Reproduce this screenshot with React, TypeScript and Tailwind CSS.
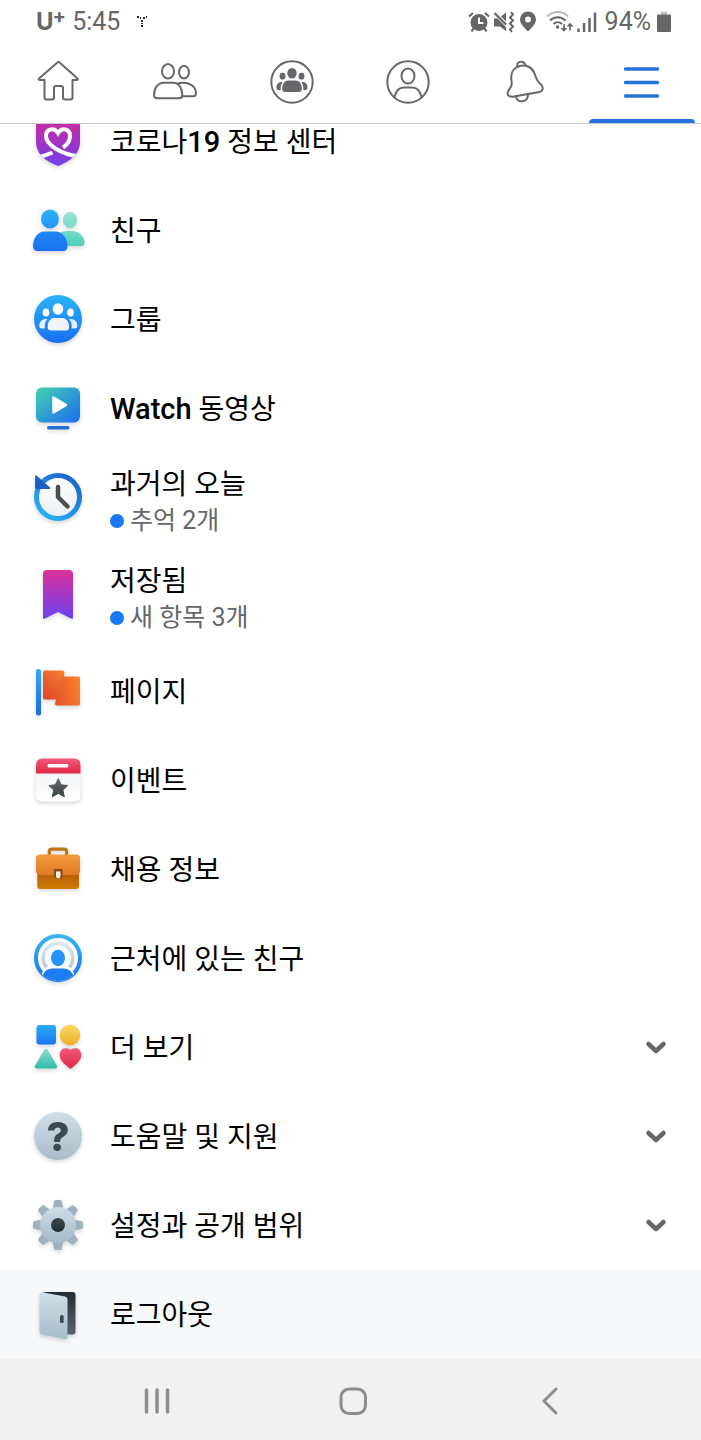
import React from 'react';

interface MenuItem {
  label: React.ReactNode;
  icon: React.ReactNode;
  note?: string;
  expandable?: boolean;
  highlighted?: boolean;
}

interface GradientProps {
  id: string;
  from: string;
  to: string;
  diagonal?: boolean;
}

const Gradient: React.FC<GradientProps> = ({ id, from, to, diagonal }) => (
  <linearGradient id={id} x1="0" y1="0" x2={diagonal ? '1' : '0'} y2="1">
    <stop offset="0" stopColor={from} />
    <stop offset="1" stopColor={to} />
  </linearGradient>
);

const MenuIcon: React.FC<{ children: React.ReactNode }> = ({ children }) => (
  <svg viewBox="0 0 56 56" className="size-14 shrink-0 overflow-visible drop-shadow-[0_2px_2px_rgba(0,0,0,0.16)]" aria-hidden="true">
    {children}
  </svg>
);

const CovidIcon = () => (
  <MenuIcon>
    <defs>
      <Gradient id="covid" from="#d02a9c" to="#6f3fee" />
      <clipPath id="covid-shield">
        <path d="M9 9.500H47Q50 9.500 50 12.500V29C50 41 41 48 28 53C15 48 6 41 6 29V12.500Q6 9.500 9 9.500Z" />
      </clipPath>
    </defs>
    <g clipPath="url(#covid-shield)">
      <rect x="4" y="6" width="48" height="48" fill="url(#covid)" />
      <path d="M5 44.500Q14 43.500 22.500 39.500" fill="none" stroke="#fff" strokeWidth="4" />
      <path
        d="M33 34.500C38 31 40 27 40 23C40 15.500 31.500 14 28 20C24.500 14 16 15.500 16 23C16 31 30 42 52 43.500"
        fill="none"
        stroke="#fff"
        strokeWidth="4"
      />
    </g>
  </MenuIcon>
);

const FriendsIcon = () => (
  <MenuIcon>
    <defs>
      <Gradient id="fr-head" from="#2ab2fb" to="#2397f7" />
      <Gradient id="fr-body" from="#2088f7" to="#1a70f0" />
      <Gradient id="fr-head2" from="#9ce3d6" to="#78dacb" />
      <Gradient id="fr-body2" from="#72dac8" to="#4bd0b9" />
    </defs>
    <ellipse cx="40" cy="18" rx="7" ry="8" fill="url(#fr-head2)" />
    <path d="M28 32Q32 29 37 29H41C49 29 54.500 34.500 54.500 40.500Q54.500 44 51 44H28Z" fill="url(#fr-body2)" />
    <ellipse cx="20" cy="17" rx="9" ry="9.500" fill="url(#fr-head)" />
    <path d="M14 29.500H26C32 29.500 37.500 36 37.500 44Q37.500 49 33 49H7.500Q3 49 3 44C3 36 8 29.500 14 29.500Z" fill="url(#fr-body)" />
  </MenuIcon>
);

const GroupsIcon = () => (
  <MenuIcon>
    <defs>
      <Gradient id="groups" from="#2bb3fc" to="#186ff0" />
    </defs>
    <circle cx="28" cy="28" r="24" fill="url(#groups)" />
    <g fill="#fff">
      <ellipse cx="28" cy="18" rx="5.300" ry="5.700" />
      <ellipse cx="16" cy="21.500" rx="3.300" ry="4" />
      <ellipse cx="40.500" cy="21.500" rx="3.300" ry="4" />
      <path d="M24 27H32.500C36 27 39 30.500 39 36Q39 39.500 36 39.500H21Q17.700 39.500 17.700 36C17.700 30.500 20.500 27 24 27Z" fill="#f1f4fb" />
      <path d="M17.500 28C15 30.500 14.300 33.500 15 37.500H11.500Q9.300 37.500 9.300 35C9.300 30 12.500 27.500 17.500 28Z" fill="#e3eefc" />
      <path d="M39 28C41.500 30.500 42.200 33.500 41.500 37.500H45Q47.400 37.500 47.400 35C47.400 30 44 27.500 39 28Z" fill="#e3eefc" />
    </g>
  </MenuIcon>
);

const WatchIcon = () => (
  <MenuIcon>
    <defs>
      <Gradient id="watch" from="#42d3ae" to="#1a6cf2" diagonal />
    </defs>
    <rect x="6" y="7.500" width="44" height="35" rx="6" fill="url(#watch)" />
    <path d="M23.500 17.500V32.500L36 25Z" fill="#fff" stroke="#fff" strokeWidth="2.500" strokeLinejoin="round" />
    <rect x="17" y="46" width="22.500" height="3.500" rx="1.700" fill="#216fd8" />
  </MenuIcon>
);

const MemoriesIcon = () => (
  <MenuIcon>
    <defs>
      <linearGradient id="memories" x1="0" y1="1" x2="0.700" y2="0">
        <stop offset="0" stopColor="#2cb9f8" />
        <stop offset="1" stopColor="#1c68cf" />
      </linearGradient>
      <Gradient id="memories-face" from="#ffffff" to="#eceff3" />
    </defs>
    <circle cx="28" cy="28" r="21.500" fill="url(#memories-face)" stroke="url(#memories)" strokeWidth="5" />
    <path d="M5.200 7Q5.500 5.500 7 7L20 18.500Q21 20 19.500 20H6.500Q5 20 5 18.500Z" fill="#1b60c6" />
    <path d="M28 18V28L37.500 37.500" fill="none" stroke="#4b4e50" strokeWidth="4.500" strokeLinecap="round" strokeLinejoin="round" />
  </MenuIcon>
);

const SavedIcon = () => (
  <MenuIcon>
    <defs>
      <Gradient id="saved" from="#dc2f99" to="#6b42f0" />
    </defs>
    <path d="M17 4H39Q43 4 43 8V51.500Q43 53.500 41 52.500L28 46L15 52.500Q13 53.500 13 51.500V8Q13 4 17 4Z" fill="url(#saved)" />
  </MenuIcon>
);

const PagesIcon = () => (
  <MenuIcon>
    <defs>
      <Gradient id="pole" from="#33a8f5" to="#1d6ce0" />
      <linearGradient id="flag-a" x1="1" y1="0" x2="0.300" y2="1">
        <stop offset="0" stopColor="#f8812f" />
        <stop offset="1" stopColor="#e24a28" />
      </linearGradient>
      <linearGradient id="flag-b" x1="1" y1="0.200" x2="0" y2="0.500">
        <stop offset="0" stopColor="#fa822d" />
        <stop offset="1" stopColor="#e4572c" />
      </linearGradient>
    </defs>
    <rect x="6" y="6" width="5" height="46.500" rx="2.500" fill="url(#pole)" />
    <path d="M14.500 7.500H32.500Q34.500 7.500 34.500 9.500L31 36.500H14.500Q13 36.500 13 35V9Q13 7.500 14.500 7.500Z" fill="url(#flag-a)" />
    <path d="M33 13.500H48.500Q50 13.500 50 15V41Q50 42.500 48.500 42.500H26.500Q24.500 42.500 25 40.500L31.500 15Q32 13.500 33 13.500Z" fill="url(#flag-b)" />
  </MenuIcon>
);

const EventsIcon = () => (
  <MenuIcon>
    <defs>
      <Gradient id="event-top" from="#f45a79" to="#de2645" />
      <Gradient id="event-page" from="#f4f6f8" to="#ffffff" />
      <Gradient id="event-star" from="#65696c" to="#3a4247" />
    </defs>
    <path d="M6 21H50.500V43Q50.500 49.500 44 49.500H12.500Q6 49.500 6 43Z" fill="url(#event-page)" />
    <path d="M6 21.500V13Q6 6.500 12.500 6.500H44Q50.500 6.500 50.500 13V21.500Z" fill="url(#event-top)" />
    <rect x="17.700" y="12" width="20.500" height="3.500" rx="1.200" fill="#fff" />
    <path
      d="M28.300 26.500L31.200 32.800L37.800 33.500L32.900 38.100L34.300 44.700L28.300 41.400L22.300 44.700L23.700 38.100L18.800 33.500L25.400 32.800Z"
      fill="url(#event-star)"
      stroke="url(#event-star)"
      strokeLinejoin="round"
    />
  </MenuIcon>
);

const JobsIcon = () => (
  <MenuIcon>
    <defs>
      <Gradient id="case-top" from="#f79a3d" to="#de7a23" />
      <Gradient id="case-bottom" from="#b05a05" to="#d07a05" />
    </defs>
    <path d="M19.300 15V11Q19.300 8.200 22 8.200H34Q36.700 8.200 36.700 11V15" fill="none" stroke="#bd7616" strokeWidth="3.200" />
    <path d="M7.300 28H49V45Q49 48 46 48H10.300Q7.300 48 7.300 45Z" fill="url(#case-bottom)" />
    <path d="M9.500 13.500H46.500Q50 13.500 50 17V30Q50 34 45 34H11Q6 34 6 30V17Q6 13.500 9.500 13.500Z" fill="url(#case-top)" />
    <path d="M24 28H32.500V34Q32.500 38 28.200 38Q24 38 24 34Z" fill="#8e4a0c" />
    <path d="M26 30.500H30.500V35Q30.500 37.500 28.200 37.500Q26 37.500 26 35Z" fill="#f3f1ee" />
  </MenuIcon>
);

const NearbyIcon = () => (
  <MenuIcon>
    <defs>
      <Gradient id="nearby" from="#36b4ee" to="#1a73f0" />
      <Gradient id="nearby-ring" from="#dbe7ee" to="#b3c4ce" />
      <clipPath id="nearby-clip">
        <circle cx="28" cy="28" r="23" />
      </clipPath>
    </defs>
    <circle cx="28" cy="28" r="22" fill="#fafcff" stroke="url(#nearby)" strokeWidth="4" />
    <circle cx="28" cy="28" r="14.800" fill="none" stroke="url(#nearby-ring)" strokeWidth="3.500" />
    <ellipse cx="28" cy="28" rx="9.500" ry="10.500" fill="#fafcff" />
    <g clipPath="url(#nearby-clip)">
      <path d="M9 54L12 43Q15 36 21 36H35Q41 36 44 43L47 54Z" fill="#fafcff" />
      <path d="M9 56L13 44.500Q16 38.500 22 38.500H34Q40 38.500 43 44.500L47 56Z" fill="#1d7df3" />
    </g>
    <ellipse cx="28" cy="28" rx="7" ry="8.200" fill="#2492f6" />
  </MenuIcon>
);

const MoreIcon = () => (
  <MenuIcon>
    <defs>
      <Gradient id="more-sq" from="#29abfb" to="#1a74f0" />
      <Gradient id="more-circle" from="#fad85c" to="#eeb02b" />
      <Gradient id="more-tri" from="#84dccd" to="#36bfa8" />
      <Gradient id="more-heart" from="#f25976" to="#de2a48" />
    </defs>
    <rect x="6.500" y="6" width="19.500" height="19.500" rx="3" fill="url(#more-sq)" />
    <circle cx="40" cy="16" r="10.300" fill="url(#more-circle)" />
    <path d="M16 31.500L25.500 47.700H6.500Z" fill="url(#more-tri)" stroke="url(#more-tri)" strokeWidth="3.500" strokeLinejoin="round" />
    <path d="M40.500 31C43 28 51.300 28 51.300 36C51.300 42 45 46 42 49Q40.500 50.200 39 49C36 46 29.700 42 29.700 36C29.700 28 38 28 40.500 31Z" fill="url(#more-heart)" />
  </MenuIcon>
);

const HelpIcon = () => (
  <MenuIcon>
    <defs>
      <Gradient id="help" from="#cfdfe8" to="#a7bcc9" />
    </defs>
    <circle cx="28" cy="28" r="24" fill="url(#help)" />
    <text x="28" y="43" textAnchor="middle" className="fill-[#3b4a51] font-['Inter',sans-serif] text-[40px] font-extrabold">
      ?
    </text>
  </MenuIcon>
);

const TEETH = [0, 45, 90, 135, 180, 225, 270, 315];

const SettingsIcon = () => (
  <MenuIcon>
    <defs>
      <Gradient id="gear" from="#cbdde7" to="#a5bac7" />
      <Gradient id="gear-hole" from="#3d484b" to="#222e35" />
    </defs>
    {TEETH.map((angle) => (
      <path key={angle} d="M22.500 13L24 4.500Q24.300 3 26 3H30Q31.700 3 32 4.500L33.500 13Z" fill="#9db1be" transform={`rotate(${angle} 28 28)`} />
    ))}
    <circle cx="28" cy="28" r="18" fill="url(#gear)" />
    <circle cx="28" cy="28" r="7" fill="url(#gear-hole)" />
  </MenuIcon>
);

const LogoutIcon = () => (
  <MenuIcon>
    <defs>
      <Gradient id="frame" from="#232e33" to="#56646c" />
      <Gradient id="door" from="#cfe0e9" to="#a6bcc9" />
    </defs>
    <rect x="12" y="6" width="33.500" height="42.500" rx="3" fill="url(#frame)" />
    <path d="M12 6.200L35 10.500Q37.500 11 37.500 13.500V50.500Q37.500 53.500 34.500 53L12 48.500Q9.500 48 9.500 45.500V8.500Q9.500 6 12 6.200Z" fill="url(#door)" />
    <rect x="30" y="29" width="3.700" height="8" rx="1.600" fill="#3d4b53" />
  </MenuIcon>
);

const TabIcon: React.FC<{ children: React.ReactNode }> = ({ children }) => (
  <svg viewBox="0 0 48 48" className="size-12" fill="none" stroke="#65676b" strokeWidth="2" strokeLinecap="round" strokeLinejoin="round" aria-hidden="true">
    {children}
  </svg>
);

const TABS: { name: string; icon: React.ReactNode; active?: boolean }[] = [
  {
    name: '홈',
    icon: (
      <TabIcon>
        <path d="M24 4L5 20.500Q4 22 6 22H10.500V39.500Q10.500 41.500 12.500 41.500H18Q20 41.500 20 39.500V30Q20 28 22 28H27Q29 28 29 30V39.500Q29 41.500 31 41.500H36.500Q38.500 41.500 38.500 39.500V22H42.500Q44.500 22 43.500 20.500L25 4Q24.500 3.600 24 4Z" />
      </TabIcon>
    ),
  },
  {
    name: '친구',
    icon: (
      <TabIcon>
        <ellipse cx="17" cy="13.300" rx="6" ry="7.300" />
        <ellipse cx="33" cy="14.300" rx="5" ry="6.200" />
        <path d="M13 24.700H22C28 24.700 31.300 30 31.300 37Q31.300 40.200 28 40.200H6.500Q3 40.200 3 37C3 30 7 24.700 13 24.700Z" />
        <path d="M27 25.500Q29 24.700 32 24.700C40 24.700 45 29.500 45 35.500Q45 38.200 42 38.200H31" />
      </TabIcon>
    ),
  },
  {
    name: '그룹',
    icon: (
      <TabIcon>
        <circle cx="24" cy="24" r="20.700" />
        <g fill="#65676b" stroke="none">
          <ellipse cx="24" cy="15.200" rx="4.700" ry="5.300" />
          <ellipse cx="14.500" cy="18.200" rx="3" ry="3.400" />
          <ellipse cx="33.500" cy="18.200" rx="3" ry="3.400" />
          <path d="M20 22.500H28C31.500 22.500 33.800 26 33.800 31Q33.800 34 31 34H17Q14.200 34 14.200 31C14.200 26 16.500 22.500 20 22.500Z" />
          <path d="M14.500 24Q12 28 12.700 32H10.500Q8.400 32 8.400 30C8.400 26 10.500 23.500 14.500 24Z" />
          <path d="M33.500 24Q36 28 35.300 32H37.500Q39.600 32 39.600 30C39.600 26 37.500 23.500 33.500 24Z" />
        </g>
      </TabIcon>
    ),
  },
  {
    name: '프로필',
    icon: (
      <TabIcon>
        <circle cx="24" cy="24" r="20.700" />
        <ellipse cx="24" cy="18" rx="6.500" ry="7.500" />
        <path d="M10.500 39C12 32 16 29.500 20 29.500H28C32 29.500 36 32 37.500 39" />
      </TabIcon>
    ),
  },
  {
    name: '알림',
    icon: (
      <TabIcon>
        <path d="M16.500 9C14.500 3.500 22.500 1.500 24.500 7" />
        <path d="M10.500 22.500C9 14 13.500 9.500 18.500 8C25 6 31.500 9.500 33.500 15.500C35 20.500 36 23 39 25.500C43 28.500 42.500 33 38.500 34L11.500 38.700C7 39.200 5.500 36 7.500 32.500C10 29 11.300 27.500 10.500 22.500Z" />
        <path d="M15 39C17 45.500 26.500 44.500 27 37.200" />
      </TabIcon>
    ),
  },
  {
    name: '메뉴',
    active: true,
    icon: (
      <TabIcon>
        <path d="M7.500 11H39.500M7.500 24.500H39.500M7.500 38H39.500" stroke="#2573d9" strokeWidth="3.500" />
      </TabIcon>
    ),
  },
];

const MENU: MenuItem[] = [
  {
    label: (
      <>
        코로나<Latin>19</Latin> 정보 센터
      </>
    ),
    icon: <CovidIcon />,
  },
  { label: '친구', icon: <FriendsIcon /> },
  { label: '그룹', icon: <GroupsIcon /> },
  {
    label: (
      <>
        <Latin>Watch</Latin> 동영상
      </>
    ),
    icon: <WatchIcon />,
  },
  { label: '과거의 오늘', icon: <MemoriesIcon />, note: '추억 2개' },
  { label: '저장됨', icon: <SavedIcon />, note: '새 항목 3개' },
  { label: '페이지', icon: <PagesIcon /> },
  { label: '이벤트', icon: <EventsIcon /> },
  { label: '채용 정보', icon: <JobsIcon /> },
  { label: '근처에 있는 친구', icon: <NearbyIcon /> },
  { label: '더 보기', icon: <MoreIcon />, expandable: true },
  { label: '도움말 및 지원', icon: <HelpIcon />, expandable: true },
  { label: '설정과 공개 범위', icon: <SettingsIcon />, expandable: true },
  { label: '로그아웃', icon: <LogoutIcon />, highlighted: true },
];

// Latin glyphs sit a little larger and heavier than the Hangul beside them
function Latin({ children }: { children: React.ReactNode }) {
  return <span className="text-[29px] leading-none font-medium">{children}</span>;
}

const StatusBar = () => (
  <div className="flex h-11 items-center justify-between pr-[30px] pb-px pl-9 text-[25px] leading-none text-[#666666]">
    <div className="flex items-center">
      <span className="flex items-start font-['Inter',sans-serif] text-[24px] leading-none font-bold">
        U<sup className="-top-1 -ml-px text-[20px] leading-none">+</sup>
      </span>
      <span className="ml-[6px]">5:45</span>
      <svg viewBox="0 0 12 12" className="ml-4 size-3" fill="#222" aria-hidden="true">
        <path d="M1 0h2v2h-2zM4 1h1v2h-1zM7 1h2v2h-2zM10 0h1v2h-1zM5 4h2v2h-2zM5 7h2v1h-2zM5 9h2v2h-2z" />
      </svg>
    </div>
    <div className="flex items-center">
      <svg viewBox="0 0 22 22" className="size-[22px]" aria-hidden="true">
        <circle cx="11" cy="11.500" r="8.500" fill="#666" />
        <path d="M1 5.500L5 2M21 5.500L17 2M5.500 17.500L3.500 20.500M16.500 17.500L18.500 20.500" stroke="#666" strokeWidth="2.200" />
        <path d="M11 6.500V12H15.500" stroke="#fff" strokeWidth="2" fill="none" />
      </svg>
      <svg viewBox="0 0 22 22" className="ml-[3px] size-[22px]" aria-hidden="true">
        <path d="M1 7.500H4.500L13 16V20L7 15.500H1ZM8 5.500L13 1.500V10.500Z" fill="#666" />
        <path d="M1.500 2L13 13.500" stroke="#666" strokeWidth="2.200" />
        <path d="M18 1L20 3.500L17 6.500L20 9.500L17 12.500L20 15.500L17 18.500L19 21" stroke="#666" strokeWidth="2" fill="none" />
      </svg>
      <svg viewBox="0 0 16 22" className="ml-[5px] h-[22px] w-4" aria-hidden="true">
        <path fillRule="evenodd" d="M8 0.500a8 8 0 0 1 8 8c0 4-4 8-8 12C4 16.500 0 12.500 0 8.500a8 8 0 0 1 8-8Zm0 5a3 3 0 1 0 0 6a3 3 0 0 0 0-6Z" fill="#666" />
      </svg>
      <svg viewBox="0 0 27 22" className="ml-[10px] h-[22px] w-[27px]" fill="none" strokeWidth="2" aria-hidden="true">
        <path d="M1 5.500C7-0.500 17-0.500 22 5.500" stroke="#bbb" />
        <path d="M4 9.500C8.500 5 15 5 19.500 9.500M7.500 13C10 10.500 13.500 10.500 16 13" stroke="#666" />
        <circle cx="11.500" cy="16" r="1.800" fill="#666" />
        <path d="M18 13V19.500M15.500 17L18 19.500L20.500 17M24 19.500V13M21.500 15.500L24 13L26.500 15.500" stroke="#666" strokeWidth="1.600" />
      </svg>
      <svg viewBox="0 0 20 22" className="ml-1 h-[22px] w-5" stroke="#666" strokeWidth="2.500" aria-hidden="true">
        <path d="M1.500 21V17.500M7 21V12M12.500 21V7M18 21V1.500" />
      </svg>
      <span className="ml-2">94%</span>
      <svg viewBox="0 0 14 22" className="ml-[6px] h-[22px] w-[14px]" aria-hidden="true">
        <path d="M4 0.500H10V4H4Z" fill="#c4c4c4" />
        <rect y="3.500" width="14" height="17.500" rx="1" fill="#666" />
      </svg>
    </div>
  </div>
);

const MenuRow: React.FC<{ item: MenuItem }> = ({ item }) => (
  <li>
    <button type="button" className={`flex w-full items-center pt-4 pr-[33px] pl-[30px] text-left ${item.note ? 'h-[97px]' : 'h-[89px]'} ${item.highlighted ? 'bg-[#f7f8fa]' : ''}`}>
      <span className="flex h-full items-start">{item.icon}</span>
      <span className={`ml-6 flex h-full flex-1 flex-col ${item.note ? '' : 'pt-[10px]'}`}>
        <span className={`text-[28px] text-black ${item.note ? '-mt-0.5 leading-9' : 'leading-10'}`}>{item.label}</span>
        {item.note && (
          <span className="flex items-center gap-[6px] text-[25px] leading-9 text-[#65676b]">
            <span className="size-[14px] rounded-full bg-[#1877f2]" />
            {item.note}
          </span>
        )}
      </span>
      {item.expandable && (
        <svg viewBox="0 0 24 24" className="-mt-4 size-6" fill="none" stroke="#65676b" strokeWidth="4.500" strokeLinecap="round" strokeLinejoin="round" aria-hidden="true">
          <path d="M4.500 8L12 15L19.500 8" />
        </svg>
      )}
    </button>
  </li>
);

export default function App() {
  return (
    <div className="flex min-h-screen flex-col bg-white font-['Roboto','Noto_Sans_CJK_KR',sans-serif]">
      <header className="border-b border-[#c6cacb]">
        <StatusBar />
        <nav className="flex pr-px">
          {TABS.map((tab) => (
            <button key={tab.name} type="button" aria-label={tab.name} className="flex flex-1 flex-col items-center">
              <span className="flex h-[75px] items-center">{tab.icon}</span>
              <span className={`h-1 w-[106px] rounded-t-sm ${tab.active ? 'bg-[#2573d9]' : ''}`} />
            </button>
          ))}
        </nav>
      </header>

      <main className="overflow-hidden">
        <ul className="-mt-[27px]">
          {MENU.map((item, index) => (
            <MenuRow key={index} item={item} />
          ))}
        </ul>
      </main>

      <nav className="flex flex-1 items-center bg-[#f1f1f1] pt-[3px] pr-[53px] pl-[59px]">
        <button type="button" aria-label="최근 앱" className="flex flex-1 justify-center">
          <svg viewBox="0 0 28 28" className="size-7" stroke="#8d8d8d" strokeWidth="3.500" strokeLinecap="round">
            <path d="M3.500 3V25M14 3V25M24.500 3V25" />
          </svg>
        </button>
        <button type="button" aria-label="홈 화면" className="flex flex-1 justify-center">
          <svg viewBox="0 0 28 28" className="size-7" fill="none" stroke="#8d8d8d" strokeWidth="3">
            <rect x="2" y="2" width="24.500" height="24.500" rx="8" />
          </svg>
        </button>
        <button type="button" aria-label="뒤로" className="flex flex-1 justify-center">
          <svg viewBox="0 0 28 28" className="size-7" fill="none" stroke="#8d8d8d" strokeWidth="3" strokeLinecap="round" strokeLinejoin="round">
            <path d="M20 2L8 14L20 26" />
          </svg>
        </button>
      </nav>
    </div>
  );
}
